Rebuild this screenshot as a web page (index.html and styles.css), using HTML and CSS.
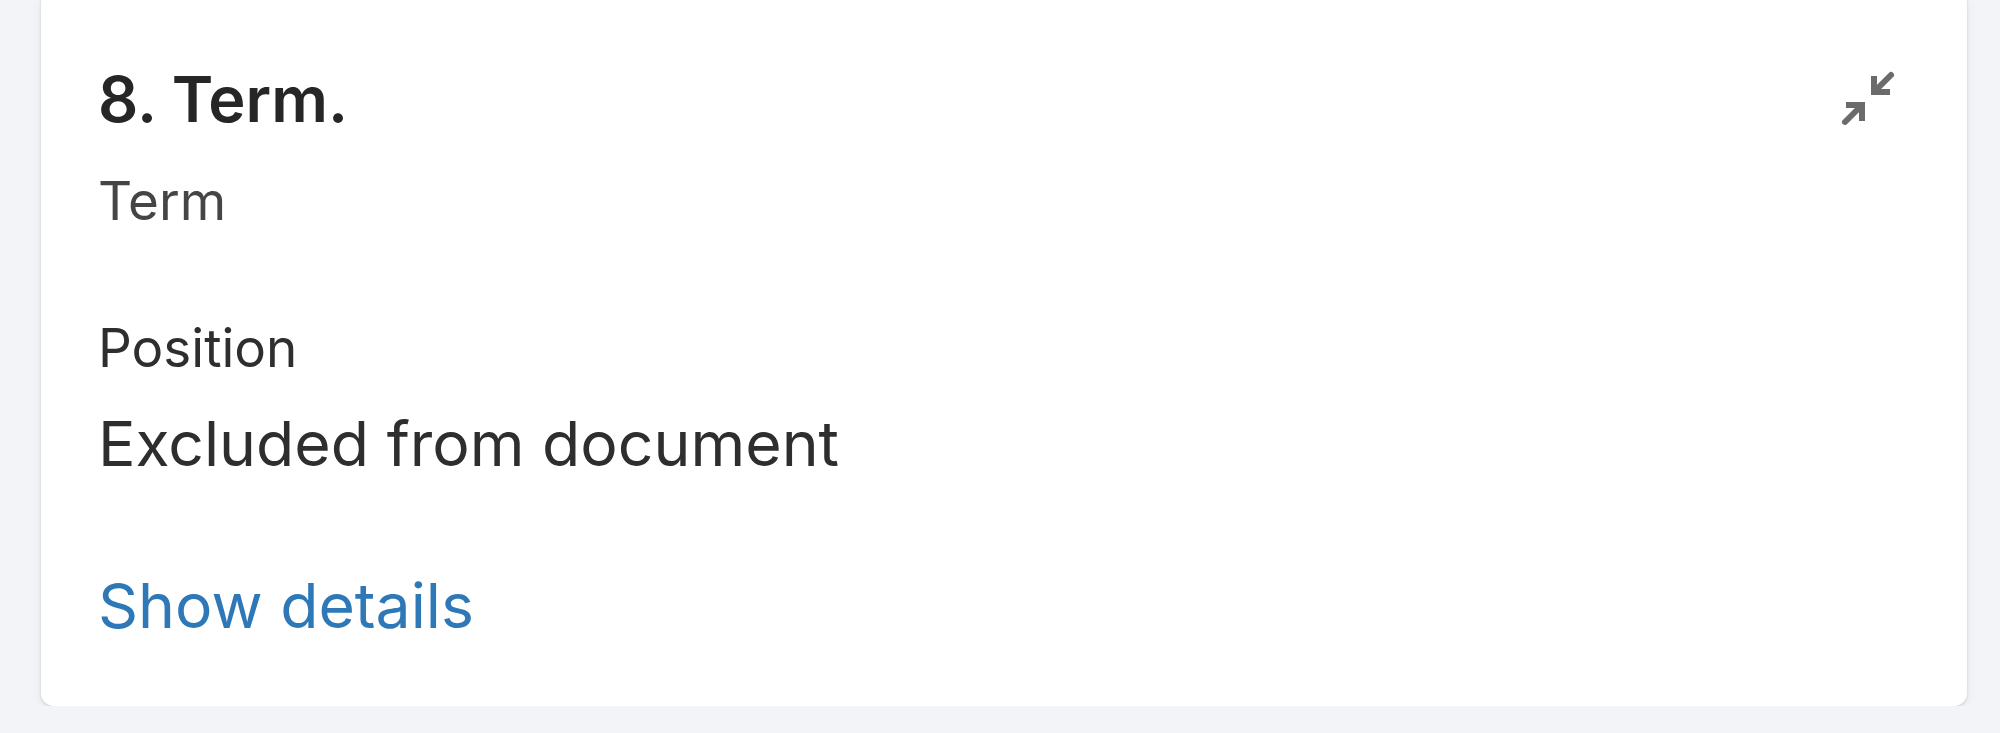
FILE: index.html
```html
<!DOCTYPE html>
<html>
<head>
  <meta name="viewport" content="width=device-width,initial-scale=1.0">
  <title>Clause 8. Term.</title>
  <link rel="stylesheet" href="styles.css">
</head>
<body>

  <div class="clause-card">
    <div class="clause-header">
      <h2 class="clause-title">8. Term.</h2>
      <button class="collapse-btn" title="Collapse">
        <svg width="64" height="64" viewBox="0 0 64 64" fill="none" stroke="#6b6b6b" stroke-width="6" stroke-linecap="round" stroke-linejoin="miter">
          <path d="M55 8 L40 23" />
          <path d="M38 9 L38 25 L54 25" stroke-linecap="butt" />
          <path d="M9 55 L24 40" />
          <path d="M26 54 L26 38 L10 38" stroke-linecap="butt" />
        </svg>
      </button>
    </div>
    <div class="clause-type">Term</div>

    <div class="field-label">Position</div>
    <div class="field-value">Excluded from document</div>

    <a class="details-link" href="#">Show details</a>
  </div>

</body>
</html>
```

FILE: styles.css
```css
body { margin: 0; background: #f3f4f7; font-family: Inter, "Liberation Sans", Arial, sans-serif; color: #2b2b2b; }

.clause-card { margin: -9px 33px 0 41px; height: 715px; box-sizing: border-box; padding: 70px 67px 0 57px; background: #fff; border-radius: 13px; box-shadow: 0 1px 3px rgba(0, 0, 0, 0.14), 0 4px 14px rgba(0, 0, 0, 0.05); display: flex; flex-direction: column; align-items: flex-start; }

.clause-header { display: flex; justify-content: space-between; align-items: center; align-self: stretch; }
.clause-title { margin: 0; font-size: 63px; line-height: 76px; font-weight: 600; color: #262626; }
.collapse-btn { border: none; background: none; padding: 0; margin: 0; width: 64px; height: 64px; cursor: pointer; }
.collapse-btn svg { display: block; }

.clause-type { margin-top: 31px; font-size: 53px; line-height: 66px; color: #454545; }

.field-label { margin-top: 81px; font-size: 53px; line-height: 66px; color: #2e2e2e; }
.field-value { margin-top: 22px; font-size: 62.5px; line-height: 80px; color: #2e2e2e; }

.details-link { margin-top: 82px; font-size: 62.5px; line-height: 80px; color: #2f78b7; text-decoration: none; }
```
